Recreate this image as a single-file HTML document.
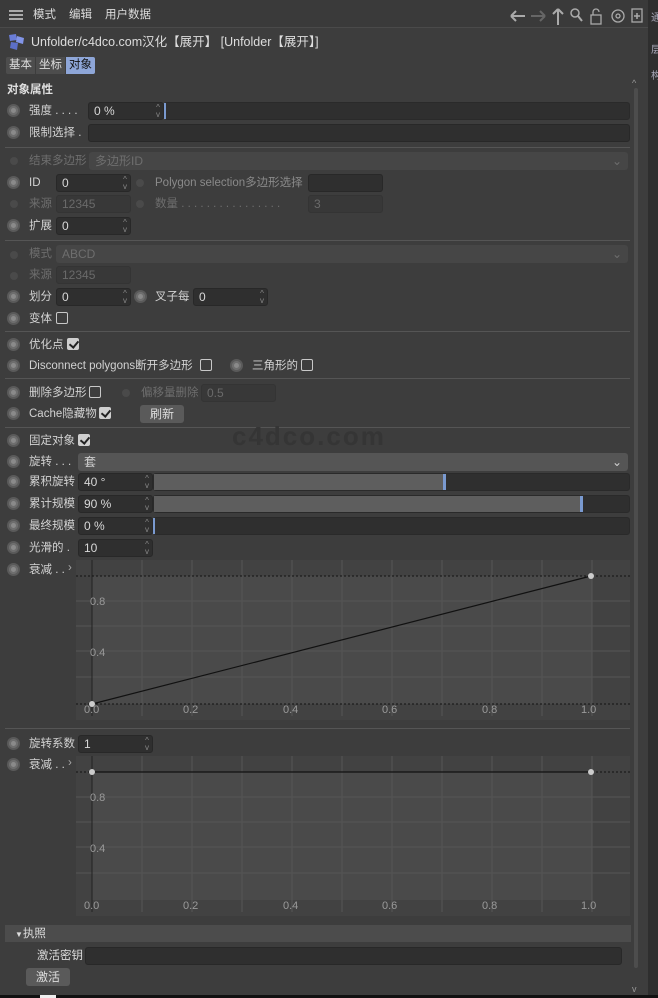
<!DOCTYPE html>
<html><head><meta charset="utf-8">
<style>
*{box-sizing:border-box;margin:0;padding:0}
body{width:658px;height:998px;background:#3d3d3d;font-family:"Liberation Sans","Noto Sans CJK SC",sans-serif;font-size:12px;color:#d2d2d2;position:relative;overflow:hidden}
.a{position:absolute}
.r{position:absolute;width:13px;height:13px;border-radius:50%;background:#8a8a8a;border:2px solid #5a5a5a;box-shadow:inset 0 0 0 2px #6e6e6e}
.rs{position:absolute;width:8px;height:8px;border-radius:50%;background:#4a4a4a}
.l{position:absolute;white-space:nowrap;line-height:14px;font-size:11.5px}
.dim{color:#6e6e6e}
.f{position:absolute;height:18px;background:#2f2f2f;border:1px solid #282828;border-radius:3px;padding-left:5px;line-height:16px;color:#d8d8d8}
.f.d{background:#383838;color:#6a6a6a;border-color:#343434}
.sp{position:absolute;right:3px;top:1px;font-size:8px;line-height:7px;color:#888;text-align:center}
.dd{position:absolute;height:18px;background:#555;border-radius:3px;padding-left:6px;line-height:18px}
.dd.d{background:#464646;color:#6e6e6e}
.cb{position:absolute;width:12px;height:12px;border:1px solid #c8c8c8;border-radius:2px}
.cb.on{background:#cfcfcf;border-color:#cfcfcf}
.cb.on::after{content:"";position:absolute;left:3px;top:0px;width:4px;height:7px;border:solid #222;border-width:0 2px 2px 0;transform:rotate(40deg)}
.sep{position:absolute;left:5px;width:625px;height:1px;background:#555}
.sl{position:absolute;height:18px;background:#2f2f2f;border:1px solid #2a2a2a;border-radius:3px}
.btn{position:absolute;height:18px;background:#5a5a5a;border-radius:3px;text-align:center;line-height:18px;color:#ddd}
</style></head><body>
<div class="a" style="left:0;top:0;width:648px;height:28px;background:#3a3a3a;border-bottom:1px solid #4a4a4a"></div>
<div class="a" style="left:9px;top:10px;width:14px;height:2px;background:#aaa;box-shadow:0 4px 0 #aaa,0 8px 0 #aaa"></div>
<div class="l" style="left:33px;top:8px;color:#ddd">模式</div>
<div class="l" style="left:69px;top:8px;color:#ddd">编辑</div>
<div class="l" style="left:105px;top:8px;color:#ddd">用户数据</div>
<svg class="a" style="left:505px;top:5px" width="140" height="22" viewBox="0 0 140 22" fill="none" stroke="#aaa" stroke-width="2">
<path d="M6 11h14M6 11l5-5M6 11l5 5"/>
<path d="M26 11h14M40 11l-5-5M40 11l-5 5" stroke="#666"/>
<path d="M53 4v16M53 4l-5 5M53 4l5 5"/>
<circle cx="70" cy="8" r="4" stroke-width="1.5"/><path d="M73 11l4 5"/>
<rect x="86" y="10" width="10" height="9" stroke-width="1.3"/><path d="M88 10V7a3 3 0 0 1 6 0" stroke-width="1.3"/>
<circle cx="113" cy="11" r="6" stroke-width="1.3"/><circle cx="113" cy="11" r="2" stroke-width="1.3"/>
<rect x="127" y="4" width="10" height="13" stroke-width="1.3"/><path d="M132 8v6M129 11h6" stroke-width="1.5"/>
</svg>
<div class="a" style="left:648px;top:0;width:10px;height:998px;background:#2e2e2e"></div>
<div class="l" style="left:651px;top:12px;font-size:10px;color:#aab">通</div>
<div class="l" style="left:651px;top:44px;font-size:10px;color:#aab">层</div>
<div class="l" style="left:651px;top:70px;font-size:10px;color:#aab">构</div>
<div class="a" style="left:634px;top:88px;width:4px;height:880px;background:#4d4d4d;border-radius:2px"></div>
<div class="l" style="left:632px;top:76px;font-size:9px;color:#999">^</div>
<div class="l" style="left:632px;top:982px;font-size:9px;color:#999">v</div>
<svg class="a" style="left:7px;top:33px" width="20" height="18" viewBox="0 0 20 18"><path d="M2 2l7-1 1 6-7 1z" fill="#6a7dd8"/><path d="M10 3l7 2-1 6-7-2z" fill="#8295e8"/><path d="M4 9l7 1-1 7-7-2z" fill="#5c6fc8"/></svg>
<div class="l" style="left:31px;top:35px;font-size:12.5px;color:#ddd">Unfolder/c4dco.com汉化【展开】 [Unfolder【展开】]</div>
<div class="a" style="left:6px;top:57px;width:29px;height:17px;background:#4d4d4d;border-radius:2px 0 0 2px"></div>
<div class="l" style="left:9px;top:58px;color:#ddd">基本</div>
<div class="a" style="left:36px;top:57px;width:29px;height:17px;background:#4d4d4d"></div>
<div class="l" style="left:39px;top:58px;color:#ddd">坐标</div>
<div class="a" style="left:66px;top:57px;width:29px;height:17px;background:#8ea6d8;border-radius:0 2px 2px 0"></div>
<div class="l" style="left:69px;top:58px;color:#111">对象</div>
<div class="l" style="left:7px;top:83px;font-weight:bold;color:#e0e0e0">对象属性</div>

<div class="r" style="left:7px;top:104px"></div><div class="l" style="left:29px;top:104px">强度 . . . .</div>
<div class="f" style="left:88px;top:102px;width:76px">0 %<div class="sp">^<br>v</div></div>
<div class="sl" style="left:164px;top:102px;width:466px"></div><div class="a" style="left:164px;top:103px;width:2px;height:16px;background:#7a9ad0"></div>
<div class="r" style="left:7px;top:126px"></div><div class="l" style="left:29px;top:126px">限制选择 .</div>
<div class="f" style="left:88px;top:124px;width:542px"></div>
<div class="sep" style="top:147px"></div>

<div class="rs" style="left:10px;top:157px"></div><div class="l dim" style="left:29px;top:154px">结束多边形</div>
<div class="dd d" style="left:89px;top:152px;width:539px">多边形ID<span style="position:absolute;right:6px">⌄</span></div>
<div class="r" style="left:7px;top:176px"></div><div class="l" style="left:29px;top:176px">ID</div>
<div class="f" style="left:56px;top:174px;width:75px">0<div class="sp">^<br>v</div></div>
<div class="rs" style="left:136px;top:179px"></div><div class="l dim" style="left:155px;top:176px;color:#8a8a8a">Polygon selection多边形选择</div>
<div class="f" style="left:308px;top:174px;width:75px"></div>
<div class="rs" style="left:10px;top:200px"></div><div class="l dim" style="left:29px;top:197px">来源</div>
<div class="f d" style="left:56px;top:195px;width:75px">12345</div>
<div class="rs" style="left:136px;top:200px"></div><div class="l dim" style="left:155px;top:197px">数量 . . . . . . . . . . . . . . . .</div>
<div class="f d" style="left:308px;top:195px;width:75px">3</div>
<div class="r" style="left:7px;top:219px"></div><div class="l" style="left:29px;top:219px">扩展</div>
<div class="f" style="left:56px;top:217px;width:75px">0<div class="sp">^<br>v</div></div>
<div class="sep" style="top:240px"></div>

<div class="rs" style="left:10px;top:251px"></div><div class="l dim" style="left:29px;top:247px">模式</div>
<div class="dd d" style="left:56px;top:245px;width:572px">ABCD<span style="position:absolute;right:6px">⌄</span></div>
<div class="rs" style="left:10px;top:272px"></div><div class="l dim" style="left:29px;top:268px">来源</div>
<div class="f d" style="left:56px;top:266px;width:75px">12345</div>
<div class="r" style="left:7px;top:290px"></div><div class="l" style="left:29px;top:290px">划分</div>
<div class="f" style="left:56px;top:288px;width:75px">0<div class="sp">^<br>v</div></div>
<div class="r" style="left:134px;top:290px"></div><div class="l" style="left:155px;top:290px">叉子每</div>
<div class="f" style="left:193px;top:288px;width:75px">0<div class="sp">^<br>v</div></div>
<div class="r" style="left:7px;top:312px"></div><div class="l" style="left:29px;top:312px">变体</div>
<div class="cb" style="left:56px;top:312px"></div>
<div class="sep" style="top:331px"></div>

<div class="r" style="left:7px;top:338px"></div><div class="l" style="left:29px;top:338px">优化点</div>
<div class="cb on" style="left:67px;top:338px"></div>
<div class="r" style="left:7px;top:359px"></div><div class="l" style="left:29px;top:359px">Disconnect polygons断开多边形</div>
<div class="cb" style="left:200px;top:359px"></div>
<div class="r" style="left:230px;top:359px"></div><div class="l" style="left:252px;top:359px">三角形的</div>
<div class="cb" style="left:301px;top:359px"></div>
<div class="sep" style="top:378px"></div>

<div class="r" style="left:7px;top:386px"></div><div class="l" style="left:29px;top:386px">删除多边形</div>
<div class="cb" style="left:89px;top:386px"></div>
<div class="rs" style="left:122px;top:389px"></div><div class="l dim" style="left:141px;top:386px">偏移量删除</div>
<div class="f d" style="left:201px;top:384px;width:75px">0.5</div>
<div class="r" style="left:7px;top:407px"></div><div class="l" style="left:29px;top:407px">Cache隐藏物</div>
<div class="cb on" style="left:99px;top:407px"></div>
<div class="btn" style="left:140px;top:405px;width:44px">刷新</div>
<div class="sep" style="top:427px"></div>
<div class="l" style="left:232px;top:421px;font-size:26px;line-height:30px;font-weight:bold;color:#353535;letter-spacing:2px">c4dco.com</div>

<div class="r" style="left:7px;top:434px"></div><div class="l" style="left:29px;top:434px">固定对象</div>
<div class="cb on" style="left:78px;top:434px"></div>
<div class="r" style="left:7px;top:455px"></div><div class="l" style="left:29px;top:455px">旋转 . . .</div>
<div class="dd" style="left:78px;top:453px;width:550px">套<span style="position:absolute;right:6px">⌄</span></div>
<div class="r" style="left:7px;top:475px"></div><div class="l" style="left:29px;top:475px">累积旋转</div>
<div class="f" style="left:78px;top:473px;width:75px">40 °<div class="sp">^<br>v</div></div>
<div class="sl" style="left:153px;top:473px;width:477px"></div><div class="a" style="left:154px;top:474px;width:289px;height:16px;background:#5e5e5e"></div><div class="a" style="left:443px;top:474px;width:3px;height:16px;background:#7a9ad0"></div>
<div class="r" style="left:7px;top:497px"></div><div class="l" style="left:29px;top:497px">累计规模</div>
<div class="f" style="left:78px;top:495px;width:75px">90 %<div class="sp">^<br>v</div></div>
<div class="sl" style="left:153px;top:495px;width:477px"></div><div class="a" style="left:154px;top:496px;width:426px;height:16px;background:#5e5e5e"></div><div class="a" style="left:580px;top:496px;width:3px;height:16px;background:#7a9ad0"></div>
<div class="r" style="left:7px;top:519px"></div><div class="l" style="left:29px;top:519px">最终规模</div>
<div class="f" style="left:78px;top:517px;width:75px">0 %<div class="sp">^<br>v</div></div>
<div class="sl" style="left:153px;top:517px;width:477px"></div><div class="a" style="left:153px;top:518px;width:2px;height:16px;background:#7a9ad0"></div>
<div class="r" style="left:7px;top:541px"></div><div class="l" style="left:29px;top:541px">光滑的 .</div>
<div class="f" style="left:78px;top:539px;width:75px">10<div class="sp">^<br>v</div></div>

<div class="r" style="left:7px;top:563px"></div><div class="l" style="left:29px;top:563px">衰减 . .</div><div class="l" style="left:68px;top:561px;color:#aaa">›</div>
<svg class="a" style="left:76px;top:560px" width="554" height="160" viewBox="0 0 554 160" font-family="Liberation Sans" font-size="11" fill="#9a9a9a">
<rect x="0" y="0" width="554" height="160" fill="#424242"/>
<rect x="16" y="16" width="500" height="128" fill="#4a4a4a"/>
<g stroke="#555" stroke-width="1"><path d="M66 0v156M116 0v156M166 0v156M216 0v156M266 0v156M316 0v156M366 0v156M416 0v156M466 0v156M516 0v156M0 41h554M0 66h554M0 91h554M0 117h554"/></g>
<path d="M16 0v156" stroke="#222"/>
<path d="M0 16h554M0 144h554" stroke="#111" stroke-dasharray="2 2"/>
<path d="M16 144L515 16" stroke="#111" stroke-width="1.2"/>
<circle cx="16" cy="144" r="3" fill="#ccc"/><circle cx="515" cy="16" r="3" fill="#ccc"/>
<text x="14" y="45">0.8</text><text x="14" y="96">0.4</text>
<text x="8" y="153">0.0</text><text x="107" y="153">0.2</text><text x="207" y="153">0.4</text><text x="306" y="153">0.6</text><text x="406" y="153">0.8</text><text x="505" y="153">1.0</text>
</svg>
<div class="sep" style="top:728px"></div>
<div class="r" style="left:7px;top:737px"></div><div class="l" style="left:29px;top:737px">旋转系数</div>
<div class="f" style="left:78px;top:735px;width:75px">1<div class="sp">^<br>v</div></div>
<div class="r" style="left:7px;top:758px"></div><div class="l" style="left:29px;top:758px">衰减 . .</div><div class="l" style="left:68px;top:756px;color:#aaa">›</div>
<svg class="a" style="left:76px;top:756px" width="554" height="160" viewBox="0 0 554 160" font-family="Liberation Sans" font-size="11" fill="#9a9a9a">
<rect x="0" y="0" width="554" height="160" fill="#424242"/>
<rect x="16" y="16" width="500" height="128" fill="#4a4a4a"/>
<g stroke="#555" stroke-width="1"><path d="M66 0v156M116 0v156M166 0v156M216 0v156M266 0v156M316 0v156M366 0v156M416 0v156M466 0v156M516 0v156M0 41h554M0 66h554M0 91h554M0 117h554"/></g>
<path d="M16 0v156" stroke="#222"/>
<path d="M0 16h554" stroke="#111" stroke-dasharray="2 2"/>
<path d="M16 16H515" stroke="#111" stroke-width="1.2"/>
<circle cx="16" cy="16" r="3" fill="#ccc"/><circle cx="515" cy="16" r="3" fill="#ccc"/>
<text x="14" y="45">0.8</text><text x="14" y="96">0.4</text>
<text x="8" y="153">0.0</text><text x="107" y="153">0.2</text><text x="207" y="153">0.4</text><text x="306" y="153">0.6</text><text x="406" y="153">0.8</text><text x="505" y="153">1.0</text>
</svg>

<div class="a" style="left:5px;top:925px;width:626px;height:17px;background:#4c4c4c"></div>
<div class="l" style="left:15px;top:927px;color:#ddd"><span style="font-size:8px">▼</span>执照</div>
<div class="l" style="left:37px;top:949px;color:#ddd">激活密钥</div>
<div class="f" style="left:85px;top:947px;width:537px;height:18px"></div>
<div class="btn" style="left:26px;top:968px;width:44px">激活</div>
<div class="a" style="left:0;top:995px;width:658px;height:3px;background:#111"></div>
<div class="a" style="left:40px;top:995px;width:16px;height:3px;background:#eee"></div>
</body></html>
